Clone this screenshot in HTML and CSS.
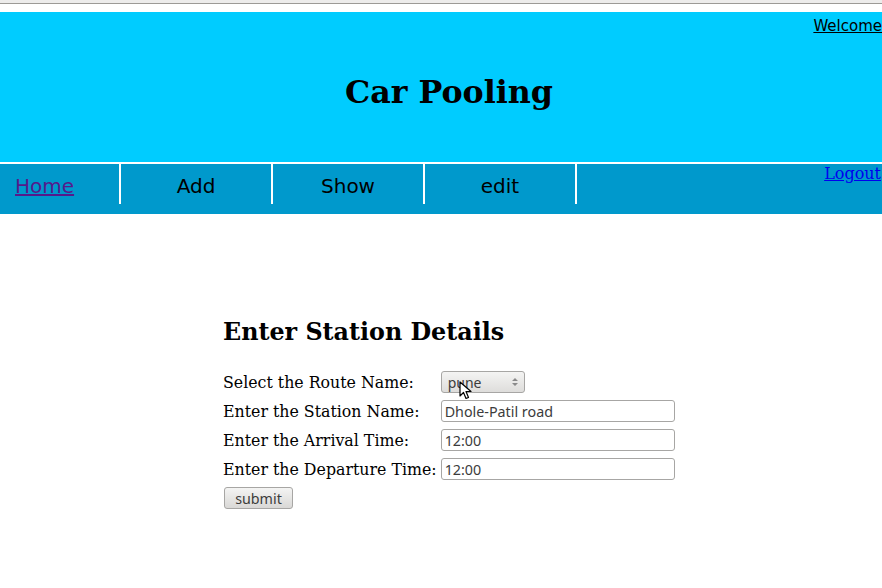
FILE: index.html
```html
<!DOCTYPE html>
<html>
<head>
<meta charset="utf-8">
<link rel="stylesheet" href="styles.css">
</head>
<body>
<div class="chrome"></div>
<div class="page">
  <header class="header">
    <a class="welcome" href="#">Welcome</a>
    <h1 class="title">Car Pooling</h1>
  </header>
  <nav class="nav">
    <a class="nav-item home" href="#">Home</a>
    <span class="nav-item">Add</span>
    <span class="nav-item">Show</span>
    <span class="nav-item">edit</span>
    <a class="logout" href="#">Logout</a>
  </nav>
  <main class="main">
    <h2 class="heading">Enter Station Details</h2>
    <table class="form">
      <tr><td class="label">Select the Route Name:</td><td class="field"><span class="select">pune<span class="arrows"><svg width="6" height="10" viewBox="0 0 6 10"><path d="M0 4 L3 1 L6 4Z M0 6 L3 9 L6 6Z" fill="#8a8a8a"/></svg></span><svg class="cursor" width="14" height="20" viewBox="0 0 14 20"><path d="M1 1 L1 15 L4.5 11.5 L7 17.5 L9.5 16.5 L7 10.5 L12 10.5 Z" fill="#fff" stroke="#000" stroke-width="1.2" stroke-linejoin="round"/></svg></span></td></tr>
      <tr><td class="label">Enter the Station Name:</td><td class="field"><span class="input">Dhole-Patil road</span></td></tr>
      <tr><td class="label">Enter the Arrival Time:</td><td class="field"><span class="input">12:00</span></td></tr>
      <tr><td class="label">Enter the Departure Time:</td><td class="field"><span class="input">12:00</span></td></tr>
    </table>
    <span class="button">submit</span>
  </main>
</div>
</body>
</html>
```
FILE: styles.css
```css
html, body { margin: 0; padding: 0; background: #fff; }
body { font-family: "DejaVu Serif", serif; overflow: hidden; }
.chrome { height: 3px; background: #edeceb; border-bottom: 1px solid #9c9a96; }
.page { padding-top: 8px; }
.header { position: relative; height: 150px; background: #00ccff; display: flex; align-items: center; justify-content: center; }
.welcome { position: absolute; right: 0; top: 5px; font-family: "DejaVu Sans", sans-serif; font-size: 15px; color: #000; }
.title { margin: 0; font-family: "DejaVu Serif", serif; font-size: 31.7px; font-weight: bold; color: #000; padding-left: 16px; padding-top: 8px; }
.nav { position: relative; margin-top: 2px; height: 50px; background: #0099cc; display: flex; align-items: flex-start; }
.nav-item { box-sizing: border-box; width: 152px; height: 40px; padding-top: 4px; border-right: 2px solid #fff; display: flex; align-items: center; justify-content: center; font-family: "DejaVu Sans", sans-serif; font-size: 20px; color: #000; text-decoration: none; }
.nav-item.home { width: 121px; justify-content: flex-start; padding-left: 15px; color: #551a8b; text-decoration: underline; }
.logout { position: absolute; right: 1px; top: 0; font-family: "DejaVu Serif", serif; font-size: 16px; color: #0000ee; }
.main { padding: 104px 0 0 223px; }
.heading { margin: 0 0 25px; font-size: 23.8px; font-weight: bold; }
.form { border-collapse: separate; border-spacing: 0; font-size: 15.8px; }
.form td { padding: 0 0 7px 0; height: 22px; vertical-align: middle; }
.label { white-space: nowrap; }
.form td.field { padding-left: 4px; }
.select { position: relative; box-sizing: border-box; display: flex; align-items: center; justify-content: space-between; width: 84px; height: 22px; padding: 0 6px 0 6px; border: 1px solid #a7a6a4; border-radius: 3px; background: linear-gradient(#f4f4f3, #dedddb); font-family: "Noto Sans", sans-serif; font-size: 14px; color: #3c3c3c; }
.arrows { display: flex; }
.cursor { position: absolute; left: 17px; top: 9px; }
.input { box-sizing: border-box; display: flex; align-items: center; width: 234px; height: 22px; padding: 0 3px; border: 1px solid #a7a6a4; border-radius: 3px; background: #fff; font-family: "Noto Sans", sans-serif; font-size: 14.3px; color: #3c3c3c; }
.button { box-sizing: border-box; display: inline-flex; align-items: center; justify-content: center; margin-left: 1px; margin-top: 0; width: 69px; height: 22px; border: 1px solid #a7a6a4; border-radius: 3px; background: linear-gradient(#f4f4f3, #d9d8d6); font-family: "Noto Sans", sans-serif; font-size: 14.3px; color: #3c3c3c; }
```
